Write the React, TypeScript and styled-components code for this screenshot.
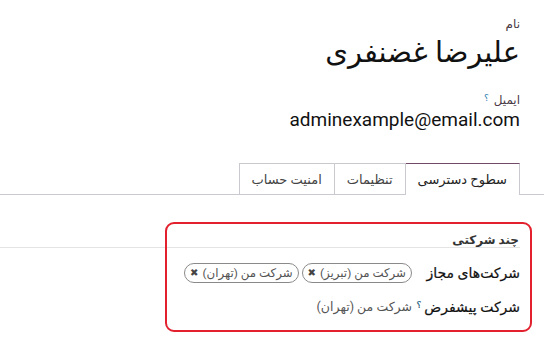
import React from "react";
import styled, { createGlobalStyle } from "styled-components";

const Global = createGlobalStyle`
  html, body { margin: 0; padding: 0; background: #fff; }
  body {
    font-family: Roboto, "DejaVu Sans", sans-serif;
    color: #212529;
    direction: rtl;
  }
`;

const Page = styled.div`
  width: 544px;
  height: 346px;
  overflow: hidden;
  position: relative;
  box-sizing: border-box;
  padding-top: 16px;
`;

const Header = styled.div`
  padding: 0 24px 0 0;
  display: flex;
  flex-direction: column;
  align-items: flex-start;
`;

const SmallLabel = styled.div`
  font-size: 12px;
  line-height: 16px;
  color: #4a3a46;
  display: flex;
  gap: 2px;
`;

const Help = styled.sup`
  font-size: 9px;
  color: #2a7fb0;
  margin-right: 3px;
  position: relative;
  top: -2px;
`;

const Name = styled.div`
  font-size: 29px;
  line-height: 40px;
  color: #111;
  margin-bottom: 20px;
`;

const Email = styled.div`
  font-size: 19px;
  line-height: 24px;
  color: #111;
  direction: ltr;
`;

const Tabs = styled.div`
  margin-top: 30px;
  display: flex;
  padding-right: 24px;
  border-bottom: 1px solid #c9c9cf;
  height: 32px;
  align-items: flex-end;
`;

const Tab = styled.div<{ $active?: boolean }>`
  height: ${(p) => (p.$active ? "32px" : "31px")};
  box-sizing: border-box;
  display: flex;
  align-items: center;
  justify-content: center;
  font-size: 13px;
  color: ${(p) => (p.$active ? "#222" : "#444")};
  background: #fff;
  border: 1px solid #c9c9cf;
  border-top: ${(p) => (p.$active ? "1px solid #714b67" : "1px solid #c9c9cf")};
  border-bottom: none;
  margin-bottom: ${(p) => (p.$active ? "-1px" : "0")};
  padding: 0 12px;
  & + & { margin-right: -1px; }
`;

const Sheet = styled.div`
  position: relative;
  padding: 39px 24px 0 0;
`;

const GroupTitle = styled.div`
  font-size: 12px;
  font-weight: 700;
  color: #333;
  line-height: 13px;
  padding: 0 1px 0 0;
  border-bottom: 1px solid #e4e4e4;
  margin-left: -24px;
`;

const Rows = styled.div`
  display: grid;
  grid-template-columns: 108px auto;
  row-gap: 14px;
  padding-top: 15px;
  justify-content: start;
  align-items: center;
`;

const FieldLabel = styled.div`
  font-size: 14px;
  font-weight: 400;
  color: #111;
  line-height: 20px;
  display: flex;
  white-space: nowrap;
  -webkit-text-stroke: 0.2px #111;
`;

const Value = styled.div`
  display: flex;
  align-items: center;
  gap: 3px;
  font-size: 12.5px;
  color: #555;
  line-height: 20px;
  white-space: nowrap;
`;

const Tag = styled.span`
  display: inline-flex;
  align-items: center;
  gap: 4px;
  height: 20px;
  box-sizing: border-box;
  border: 1px solid #8a8a8a;
  border-radius: 10px;
  padding: 0 5px 0 5px;
  font-size: 11.8px;
  color: #555;
  white-space: nowrap;
`;

const X = styled.span`
  font-size: 10px;
  color: #444;
  font-weight: 700;
  line-height: 1;
`;

const Highlight = styled.div`
  position: absolute;
  left: 165px;
  top: 222px;
  width: 367px;
  height: 110px;
  box-sizing: border-box;
  border: 2px solid #e2202e;
  border-radius: 9px;
  pointer-events: none;
`;

export default function App() {
  return (
    <>
      <Global />
      <Page>
        <Header>
          <SmallLabel>نام</SmallLabel>
          <Name>علیرضا غضنفری</Name>
          <SmallLabel>
            ایمیل<Help>؟</Help>
          </SmallLabel>
          <Email>adminexample@email.com</Email>
        </Header>
        <Tabs>
          <Tab $active>سطوح دسترسی</Tab>
          <Tab>تنظیمات</Tab>
          <Tab>امنیت حساب</Tab>
        </Tabs>
        <Sheet>
          <GroupTitle>چند شرکتی</GroupTitle>
          <Rows>
            <FieldLabel>شرکت‌های مجاز</FieldLabel>
            <Value>
              <Tag>
                شرکت من (تبریز)<X>✖</X>
              </Tag>
              <Tag>
                شرکت من (تهران)<X>✖</X>
              </Tag>
            </Value>
            <FieldLabel>
              شرکت پیشفرض<Help>؟</Help>
            </FieldLabel>
            <Value>شرکت من (تهران)</Value>
          </Rows>
        </Sheet>
        <Highlight />
      </Page>
    </>
  );
}
